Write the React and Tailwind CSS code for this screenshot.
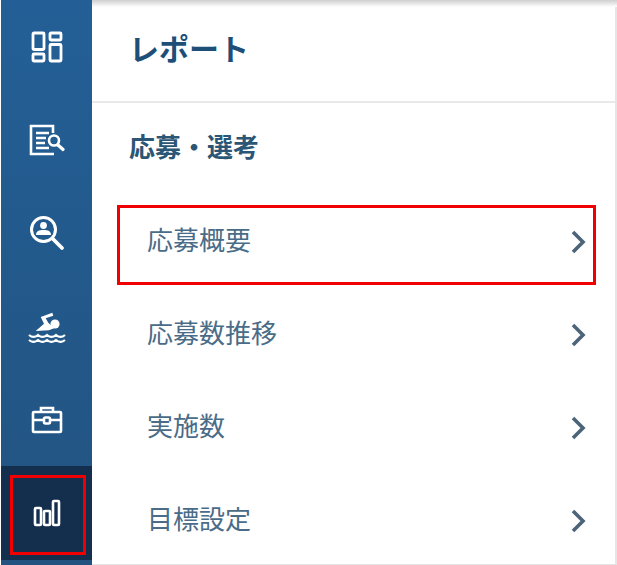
import React from 'react';

const font = { fontFamily: '"Noto Sans CJK JP", sans-serif' };

const DashboardIcon = () => (
  <svg width="32" height="32" viewBox="0 0 32 32" fill="none" stroke="white" strokeWidth="2.8">
    <rect x="2" y="2" width="11" height="16.5" rx="1" />
    <rect x="19" y="2" width="11" height="7" rx="1" />
    <rect x="2" y="23" width="11" height="7" rx="1" />
    <rect x="19" y="13.5" width="11" height="16.5" rx="1" />
  </svg>
);

const ReportSearchIcon = () => (
  <svg width="36" height="32" viewBox="0 0 36 32" fill="none" stroke="white" strokeWidth="2.6">
    <path d="M24 9V2H2v28h23" />
    <path d="M7 9h13M7 14h10M7 19h9M7 24h13" />
    <circle cx="25" cy="16.500" r="5" />
    <path d="M29 21l5 4.500" strokeWidth="3.200" strokeLinecap="round" />
  </svg>
);

const PersonSearchIcon = () => (
  <svg width="36" height="36" viewBox="0 0 36 36" fill="none" stroke="white">
    <circle cx="14.5" cy="14.5" r="12" strokeWidth="3" />
    <circle cx="14.5" cy="10.5" r="3.4" fill="white" stroke="none" />
    <path d="M7 20c0-4 3-5 7.5-5s7.500 1 7.500 5z" fill="white" stroke="none" />
    <path d="M23.500 23.500L33 33" strokeWidth="3.800" strokeLinecap="round" />
  </svg>
);

const SwimIcon = () => (
  <svg width="38" height="32" viewBox="0 0 38 32" fill="none">
    <circle cx="27" cy="13" r="4.600" fill="white" />
    <path d="M24.300 1.700L12.700 6 16 12.700 7.700 20l13.300-.7 5-2-5.700-5.600-2.600-4.400 7.600-2.600z" fill="white" />
    <path d="M1 24c3 2.500 6 2.500 9 0 3 2.500 6 2.500 9 0 3 2.500 6 2.500 9 0 3 2.500 6 2.500 9 0M1 29c3 2.500 6 2.500 9 0 3 2.500 6 2.500 9 0 3 2.500 6 2.500 9 0 3 2.500 6 2.500 9 0" stroke="white" strokeWidth="2.200" />
  </svg>
);

const BriefcaseIcon = () => (
  <svg width="32" height="28" viewBox="0 0 32 28" fill="none" stroke="white" strokeWidth="2.600">
    <rect x="2" y="6" width="28" height="20" rx="1" />
    <path d="M10 6V2h12v4M2 14h10M20 14h10" />
    <rect x="13" y="11.500" width="6" height="6" rx="1.500" />
  </svg>
);

const ChartIcon = () => (
  <svg width="28" height="28" viewBox="0 0 28 28" fill="none" stroke="white" strokeWidth="2.600">
    <rect x="2" y="9" width="6" height="17" rx="1" />
    <rect x="11" y="12" width="6" height="14" rx="1" />
    <rect x="20" y="2" width="6" height="24" rx="1" />
  </svg>
);

const icons = [DashboardIcon, ReportSearchIcon, PersonSearchIcon, SwimIcon, BriefcaseIcon, ChartIcon];
const rows = ['応募概要', '応募数推移', '実施数', '目標設定'];

const Chevron = () => (
  <svg className="mt-[4px]" width="16" height="24" viewBox="0 0 16 24" fill="none" stroke="#4d6478" strokeWidth="3.600">
    <path d="M3 2l10 10-10 10" />
  </svg>
);

export default function App() {
  return (
    <div className="relative flex w-[617px] h-[565px] overflow-hidden bg-white" style={font}>
      <aside className="ml-px w-[91px] h-[565px] shrink-0 bg-gradient-to-b from-[#235f96] to-[#225380]">
        {icons.map((Icon, i) => (
          <div
            key={i}
            className={`flex h-[93.3px] items-center justify-center ${i === 5 ? 'bg-[#142f4e]' : ''}`}
          >
            <Icon />
          </div>
        ))}
      </aside>

      <main className="flex-1 border-r-2 border-[#e6e6e6]">
        <header className="flex h-[103px] items-center border-b-2 border-[#e9e9e9] pl-[37px] pb-[7px] text-[30px] font-bold text-[#1e4f78]">
          レポート
        </header>
        <h2 className="flex h-[93px] items-center pl-[37px] pb-[8px] text-[26px] font-bold text-[#2c5675]">
          応募・選考
        </h2>
        <ul>
          {rows.map((label) => (
            <li key={label} className="flex h-[93px] items-center justify-between pb-[5px] pl-[55px] pr-[29px] text-[26px] text-[#4a6c88]">
              <span className="mb-[4px]">{label}</span>
              <Chevron />
            </li>
          ))}
        </ul>
      </main>

      {/* top shadow */}
      <div className="absolute left-[92px] right-0 top-0 h-[7px] bg-gradient-to-b from-[#cfcfcf] to-white" />
      <div className="absolute bottom-0 left-[92px] right-0 h-px bg-[#e4e4e4]" />

      {/* red highlight boxes */}
      <div className="absolute left-[117px] top-[205px] h-[80px] w-[479px] border-[3px] border-[#f00000]" />
      <div className="absolute left-[10px] top-[475px] h-[80px] w-[76px] border-[3px] border-[#f00000]" />
    </div>
  );
}
